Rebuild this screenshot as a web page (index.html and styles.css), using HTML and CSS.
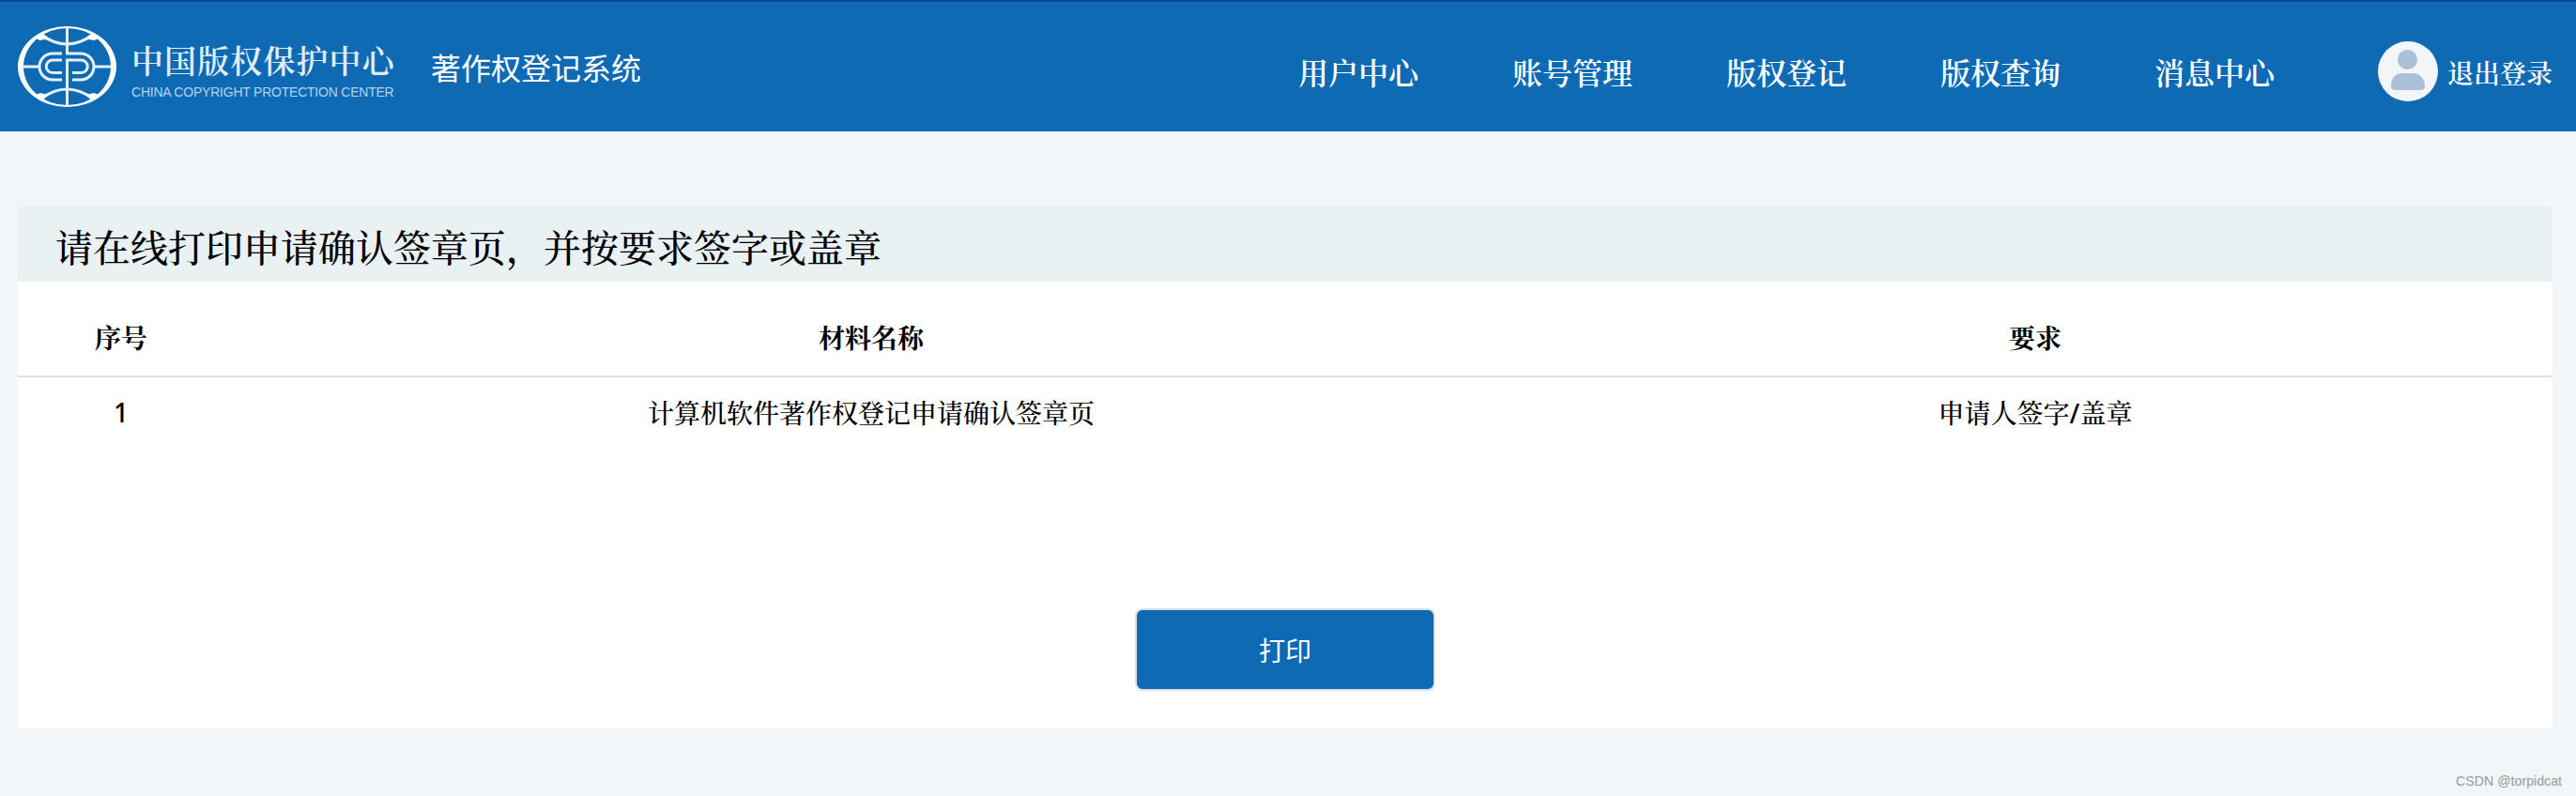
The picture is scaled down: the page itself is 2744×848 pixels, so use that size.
FILE: index.html
```
<!DOCTYPE html>
<html lang="zh-CN">
<head>
	<meta charset="UTF-8">
	<title>著作权登记系统</title>
	<link rel="stylesheet" href="styles.css">
</head>
<body>
	<div class="header">
		<div class="logo">
			<svg class="logo-pic" viewBox="0 0 106 88" fill="none" stroke="#e4eff8">
				<path d="M0 43A52.500 43 0 1 1 105 43A52.500 43 0 1 1 0 43ZM6 43A46.500 41 0 1 0 99 43A46.500 41 0 1 0 6 43Z" fill="#fff" fill-rule="evenodd" stroke="none"/>
				<path d="M25 9Q52 29 80 9M25 77Q52 57 80 77" stroke-width="3"/>
				<path d="M19 13L27 8L36 15Q30 13 24 15ZM86 13L78 8L69 15Q75 13 81 15ZM19 73L27 78L36 71Q30 73 24 71ZM86 73L78 78L69 71Q75 73 81 71Z" fill="#fff" stroke="none"/>
				<path d="M52.500 2V29H67A14 14 0 0 1 67 57H58M52.500 85V36H67.500A6.700 6.700 0 0 1 67.500 49.500H58" stroke-width="3"/>
				<path d="M47 29H37A14 14 0 0 0 37 57H47M47 36H37A6.700 6.700 0 0 0 37 49.500H47" stroke-width="3"/>
				<path d="M3 43H22M82 43H102" stroke-width="3"/>
			</svg>
			<div class="logo-text">
				<div class="logo-cn">中国版权保护中心</div>
				<div class="logo-en">CHINA COPYRIGHT PROTECTION CENTER</div>
			</div>
			<div class="system">著作权登记系统</div>
		</div>
		<ul class="nav">
			<li>用户中心</li>
			<li>账号管理</li>
			<li>版权登记</li>
			<li>版权查询</li>
			<li>消息中心</li>
		</ul>
		<div class="user">
			<svg class="avatar" viewBox="0 0 64 64">
				<circle cx="32" cy="32" r="32" fill="#f2f6f9"/>
				<circle cx="31.500" cy="19.500" r="10.500" fill="#a9c0d5"/>
				<path d="M14 48C14 39 19 34 26 34H37C45 34 50 40 50 48Q50 52 45 52H19Q14 52 14 48Z" fill="#a9c0d5"/>
			</svg>
			<span>退出登录</span>
		</div>
	</div>

	<div class="content">
		<div class="title">请在线打印申请确认签章页，并按要求签字或盖章</div>
		<table>
			<tr>
				<th class="col-1">序号</th>
				<th class="col-2">材料名称</th>
				<th>要求</th>
			</tr>
			<tr>
				<td class="number">1</td>
				<td>计算机软件著作权登记申请确认签章页</td>
				<td>申请人签字<span class="slash">/</span>盖章</td>
			</tr>
		</table>
		<button class="print">打印</button>
	</div>
	<div class="mark">CSDN @torpidcat</div>
</body>
</html>
```

FILE: styles.css
```
* {
	box-sizing: border-box;
}
body {
	margin: 0;
	height: 848px;
	overflow: hidden;
	background-color: #f2f6f9;
	font-family: "Noto Serif CJK SC", "Noto Sans CJK SC", serif;
	font-size: 28px;
	font-weight: 500;
	color: #000;
}
.header {
	display: flex;
	height: 140px;
	padding: 0 25px 0 19px;
	border-top: 2px solid #00489a;
	background-color: #0f6ab4;
	color: #fff;
}
.logo {
	display: flex;
	margin-right: auto;
	padding-top: 26px;
}
.logo-pic {
	width: 106px;
	height: 88px;
}
.logo-text {
	width: 282px;
	margin-left: 15px;
	padding-top: 10px;
	white-space: nowrap;
}
.logo-cn {
	font-size: 34px;
	font-weight: 600;
	line-height: 51px;
	letter-spacing: 1.1px;
	color: #e0ecf7;
}
.logo-en {
	font: 14px/18px "Liberation Sans", Arial, sans-serif;
	letter-spacing: -0.22px;
	color: #b5d2eb;
}
.system {
	margin-left: 37px;
	padding-top: 19px;
	font: 32px/48px "Noto Sans CJK SC", sans-serif;
}
.nav {
	display: flex;
	gap: 100px;
	margin: 0;
	padding: 50px 0 0;
	list-style: none;
	font-size: 32px;
	font-weight: 600;
	line-height: 48px;
	white-space: nowrap;
}
.user {
	display: flex;
	gap: 10px;
	margin-left: 110px;
	padding-top: 42px;
	font-weight: 600;
	line-height: 66px;
	white-space: nowrap;
}
.avatar {
	width: 64px;
	height: 64px;
}
.content {
	width: 2700px;
	height: 556px;
	margin: 80px 0 0 19px;
	background-color: #fff;
}
.title {
	height: 80px;
	padding-left: 40px;
	background-color: #e9f1f3;
	font-size: 40px;
	line-height: 84px;
}
table {
	width: 100%;
	border-spacing: 0;
	table-layout: fixed;
	text-align: center;
}
th {
	height: 102px;
	padding: 18px 0 0;
	border-bottom: 2px solid #dfe3e8;
}
td {
	height: 78px;
	padding: 0 0 4px;
}
.col-1 {
	width: 220px;
}
.col-2 {
	width: 1378px;
}
.number,
.slash {
	font-family: "Noto Sans", sans-serif;
}
.print {
	display: block;
	width: 320px;
	height: 88px;
	margin: 168px 0 0 1190px;
	padding: 0;
	border: 2px solid #dcdfe6;
	border-radius: 8px;
	background-color: #0f6ab4;
	color: #fff;
	font: 28px "Noto Sans CJK SC", sans-serif;
}
.mark {
	margin: 46px 15px 0 0;
	font: 14.2px/20px "Liberation Sans", Arial, sans-serif;
	color: #999;
	text-align: right;
}
```
